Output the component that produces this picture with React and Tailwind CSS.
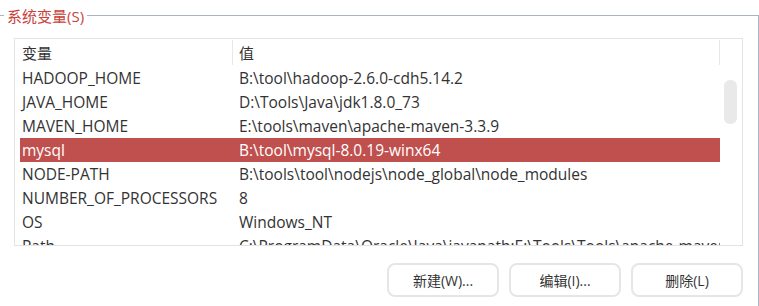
import React from 'react';

const rows = [
  { name: 'HADOOP_HOME', value: 'B:\\tool\\hadoop-2.6.0-cdh5.14.2' },
  { name: 'JAVA_HOME', value: 'D:\\Tools\\Java\\jdk1.8.0_73' },
  { name: 'MAVEN_HOME', value: 'E:\\tools\\maven\\apache-maven-3.3.9' },
  { name: 'mysql', value: 'B:\\tool\\mysql-8.0.19-winx64', selected: true },
  { name: 'NODE-PATH', value: 'B:\\tools\\tool\\nodejs\\node_global\\node_modules' },
  { name: 'NUMBER_OF_PROCESSORS', value: '8' },
  { name: 'OS', value: 'Windows_NT' },
  { name: 'Path', value: 'C:\\ProgramData\\Oracle\\Java\\javapath;E:\\Tools\\Tools\\apache-maven\\bin' },
];

const font = { fontFamily: '"Open Sans", "Noto Sans CJK SC", sans-serif' };

const App = () => {
  return (
    <div className="w-[759px] h-[306px] bg-white overflow-hidden text-[#333333]" style={font}>
      <div className="relative mt-[15px] w-[759px] border-t border-r border-[#aab2c5] pt-[22px] pl-[14px]">
        <span className="absolute left-[4px] top-[-10px] bg-white px-[3px] text-[15px] leading-[20px] text-[#c9423a]">
          系统变量(S)
        </span>

        <div className="w-[729px] h-[208px] border border-[#e3e3e3] flex flex-col">
          <div className="flex h-[27px] shrink-0 text-[15px]">
            <div className="w-[218px] border-r border-[#e8e8e8] pl-[7px] pt-[2px] my-[1px]">变量</div>
            <div className="w-[487px] border-r border-[#e8e8e8] pl-[6px] pt-[2px] my-[1px]">值</div>
            <div className="flex-1" />
          </div>

          <div className="flex h-[179px] overflow-hidden">
            <div className="w-[705px] pl-[5px]">
              {rows.map((r) => (
                <div
                  key={r.name}
                  className={`flex h-[24px] items-center pt-[2px] text-[15.5px] whitespace-nowrap ${
                    r.selected ? 'bg-[#bf504e] text-white' : ''
                  }`}
                >
                  <div className="w-[219px] pl-[2px]">{r.name}</div>
                  <div className="flex-1 overflow-hidden">{r.value}</div>
                </div>
              ))}
            </div>
            <div className="w-[22px] pl-[4px]">
              <div className="mt-[14px] w-[13px] h-[44px] rounded-[6px] bg-[#e9e9e9]" />
            </div>
          </div>
        </div>

        <div className="flex justify-end gap-[10px] pr-[15px] mt-[17px] pb-[10px]">
          {['新建(W)...', '编辑(I)...', '删除(L)'].map((t) => (
            <button
              key={t}
              type="button"
              className="w-[112px] h-[34px] rounded-[8px] border-2 border-[#e6e6e6] bg-white text-[14px] text-[#333333]"
            >
              {t}
            </button>
          ))}
        </div>
      </div>
    </div>
  );
};

export default App;
